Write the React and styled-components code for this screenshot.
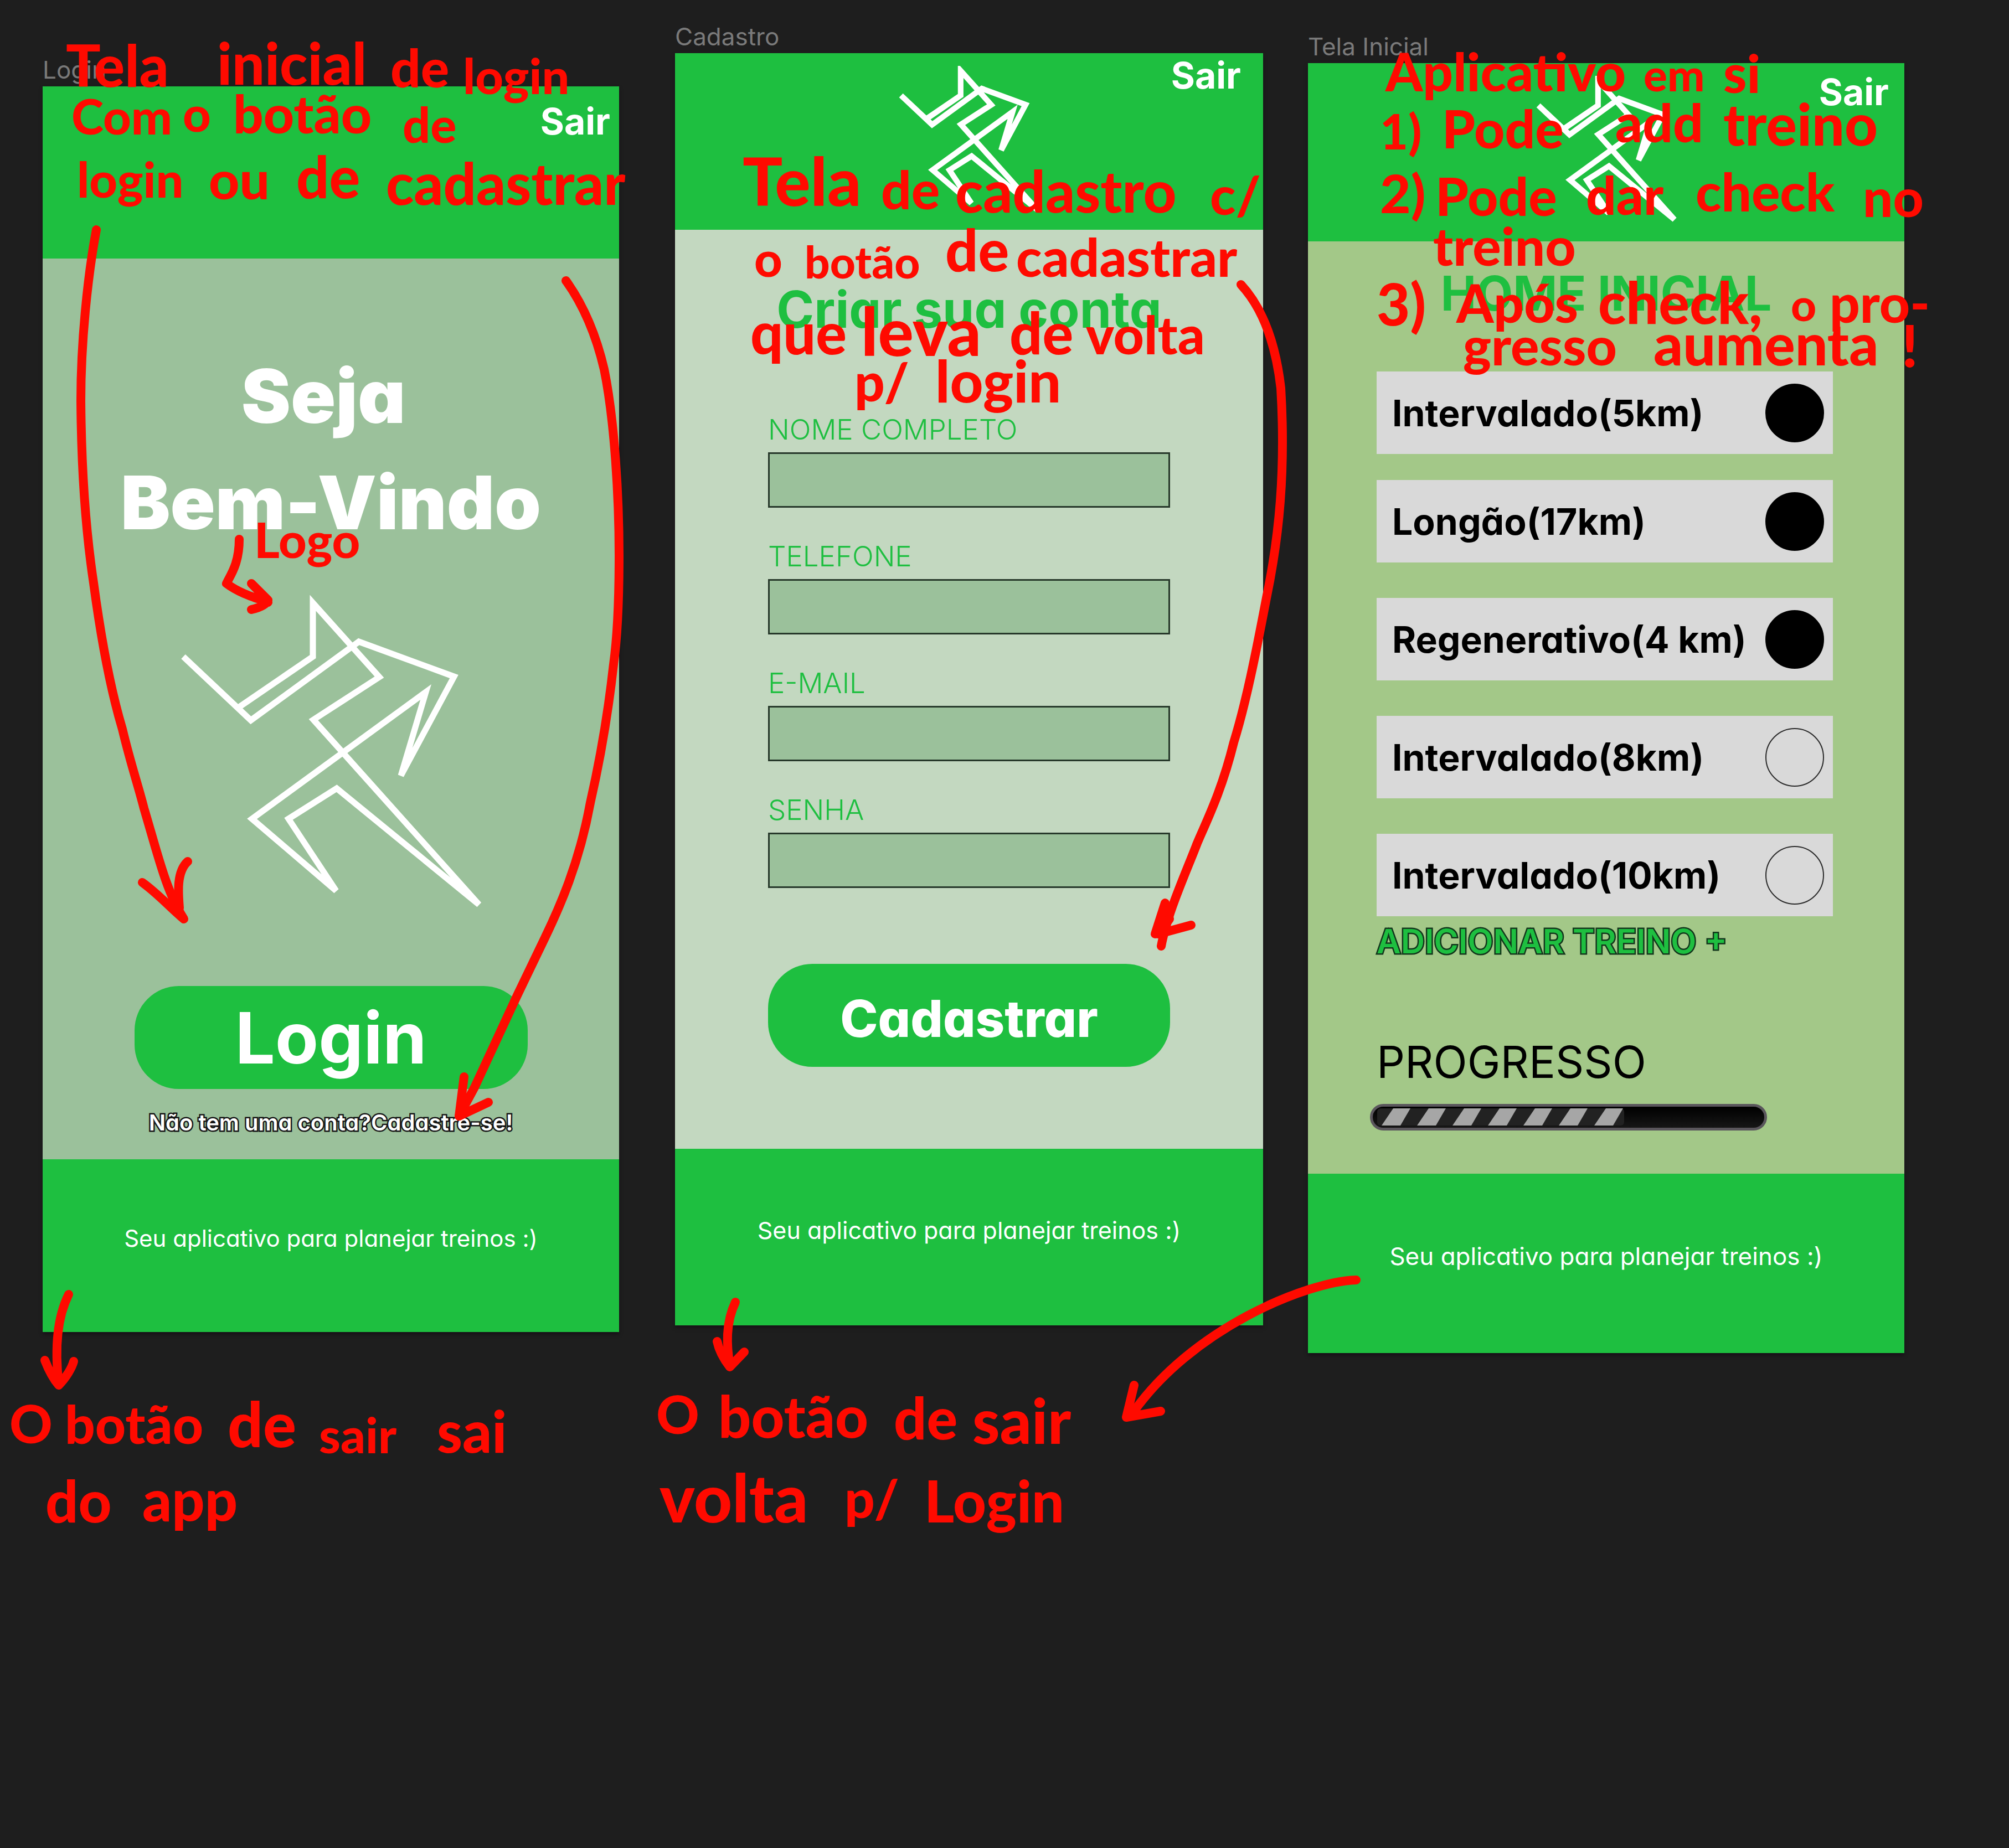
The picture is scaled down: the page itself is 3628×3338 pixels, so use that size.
import React from "react";
import styled, { createGlobalStyle } from "styled-components";

const color = {
  board: "#1e1e1e",
  green: "#1ebf40",
  sage: "#9bc19b",
  mint: "#c3d8c0",
  olive: "#a3c888",
  card: "#d9d9d9",
  label: "#7a7a7a",
  ink: "#ff0a00",
};

const GlobalStyle = createGlobalStyle`
  * { box-sizing: border-box; }
  html { background: ${color.board}; }
  body { margin: 0; font-family: Inter, "Liberation Sans", sans-serif; }
  h1, h2, p, ul { margin: 0; padding: 0; font-weight: inherit; }
  button { border: 0; margin: 0; padding: 0; background: none; font: inherit; color: inherit; cursor: pointer; }
`;

const Board = styled.main`
  position: relative;
  display: flex;
  align-items: flex-start;
  min-height: 100vh;
  padding: 0 189px 0 77px;
  background: ${color.board};
`;

const Column = styled.section`
  position: relative;
  flex: ${(p) => p.$grow} 1 0;
  min-width: 0;
  margin-left: ${(p) => p.$gap || 0}px;
  padding-top: ${(p) => p.$top}px;
`;

const FrameLabel = styled.h2`
  height: 57px;
  color: ${color.label};
  font-size: 44px;
  line-height: 54px;
`;

const Frame = styled.article`
  display: flex;
  flex-direction: column;
  font-feature-settings: "cv11" 1;
  box-shadow: 0 4px 6px rgba(15, 0, 15, 0.5);
`;

const Header = styled.header`
  display: grid;
  grid-template-columns: 1fr auto 1fr;
  align-items: start;
  height: ${(p) => p.$height}px;
  padding-top: 23px;
  background: ${color.green};
`;

const ExitButton = styled.button`
  grid-column: 3;
  justify-self: end;
  margin: ${(p) => p.$top}px ${(p) => p.$right}px 0 0;
  color: #fff;
  font-size: 66px;
  font-weight: 700;
  line-height: 76px;
  font-feature-settings: normal;
`;

const LogoDrawing = styled.svg`
  grid-column: 2;
  display: block;
  width: ${(p) => p.$width}px;
  fill: none;
  stroke: #fff;
  stroke-miterlimit: 4;
`;

const Body = styled.div`
  display: flex;
  flex-direction: column;
  align-items: ${(p) => p.$align || "center"};
  height: ${(p) => p.$height}px;
  background: ${(p) => p.$fill};
`;

const Footer = styled.footer`
  display: flex;
  align-items: center;
  justify-content: center;
  height: ${(p) => p.$height}px;
  padding-bottom: 26px;
  background: ${color.green};
  color: #fff;
  font-size: ${(p) => p.$size}px;
  line-height: 48px;
`;

const Welcome = styled.h1`
  margin: 152px 0 67px;
  color: #fff;
  font-size: 134px;
  font-weight: 900;
  line-height: 192px;
  text-align: center;
`;

const PillButton = styled.button`
  width: ${(p) => p.$width}px;
  height: 186px;
  margin-top: 137px;
  border-radius: 80px;
  background: ${color.green};
  color: #fff;
  font-size: ${(p) => p.$size}px;
  font-weight: ${(p) => p.$weight};
`;

const SignUpLink = styled.a`
  margin-top: 37px;
  color: #fff;
  font-size: 40px;
  font-weight: 600;
  line-height: 48px;
  text-decoration: none;
  -webkit-text-stroke: 5px #161616;
  paint-order: stroke fill;
`;

const ScreenTitle = styled.h1`
  align-self: center;
  margin-top: ${(p) => p.$top}px;
  color: ${color.green};
  font-size: ${(p) => p.$size}px;
  font-weight: 700;
  line-height: 100px;
`;

const Form = styled.form`
  display: flex;
  flex-direction: column;
  gap: 56px;
  width: 726px;
  margin-top: 135px;
`;

const Field = styled.label`
  display: flex;
  flex-direction: column;
  gap: 9px;
  color: ${color.green};
  font-size: 51px;
  font-weight: 300;
  line-height: 64px;
`;

const TextBox = styled.input`
  width: 100%;
  height: 100px;
  padding: 0 24px;
  border: 3px solid #26382a;
  border-radius: 0;
  background: ${color.sage};
  font: inherit;
  outline: none;
`;

const FormButton = styled(PillButton)`
  margin-top: 81px;
  padding-top: 10px;
`;

const Workouts = styled.ul`
  align-self: stretch;
  margin: 91px 129px 0 124px;
  list-style: none;
`;

const Workout = styled.li`
  display: flex;
  height: 149px;
  margin-top: 64px;
  background: ${color.card};

  &:first-child { margin-top: 0; }
  &:nth-child(2) { margin-top: 47px; }
`;

const WorkoutLabel = styled.label`
  flex: 1;
  display: flex;
  align-items: center;
  justify-content: space-between;
  padding: 0 16px 0 28px;
  color: #000;
  font-size: 66px;
  font-weight: 700;
  line-height: 72px;
`;

const Check = styled.input`
  appearance: none;
  width: 106px;
  height: 106px;
  margin: 0;
  border: 2px solid #2a2a2a;
  border-radius: 50%;

  &:checked { background: #000; border-color: #000; }
`;

const AddButton = styled.button`
  margin: 12px 0 0 124px;
  color: ${color.green};
  font-size: 60px;
  font-weight: 600;
  line-height: 66px;
  -webkit-text-stroke: 5px #12351b;
  paint-order: stroke fill;
`;

const ProgressTitle = styled.h2`
  margin: 135px 0 26px 124px;
  color: #000;
  font-size: 80px;
  line-height: 100px;
`;

const ProgressTrack = styled.div`
  width: 717px;
  height: 48px;
  margin-left: 112px;
  border: 5px solid #5a565c;
  border-radius: 24px;
  background: linear-gradient(#000, #161616);
  overflow: hidden;
`;

const Stripes = styled.svg`
  display: block;
  height: 38px;
  fill: #a6a6a6;
`;

const Note = styled.p`
  color: ${color.ink};
  font-family: Lato, "Liberation Sans", sans-serif;
  font-weight: 900;
  line-height: 1;
`;

const Word = styled.span`
  position: absolute;
  z-index: 2;
  left: ${(p) => p.$x}px;
  top: ${(p) => Math.round(p.$y - p.$size * 0.887)}px;
  font-size: ${(p) => p.$size}px;
  white-space: nowrap;
  pointer-events: none;
`;

const Arrows = styled.svg`
  position: absolute;
  z-index: 2;
  left: 0;
  top: 0;
  width: 100%;
  fill: none;
  stroke: ${color.ink};
  stroke-width: 16;
  stroke-linecap: round;
  stroke-linejoin: round;
  pointer-events: none;
`;

function Logo({ width, stroke }) {
  return (
    <LogoDrawing $width={width} viewBox="320 1070 552 574" strokeWidth={stroke} aria-label="Logo">
      <path d="M329 1186L451 1301L646 1159L818 1222L722 1401L767 1250L453 1479L605 1609L519 1479L606 1424L863 1634L564 1300L683 1223L563 1089V1186L430 1277" />
    </LogoDrawing>
  );
}

// Each word is [text, x inside its column, baseline y on the board, size].
const loginNotes = [
  [["Tela", 42, 157, 104], ["inicial", 315, 153, 104], ["de", 628, 158, 96], ["login", 759, 170, 88]],
  [["Com", 52, 243, 88], ["o", 253, 238, 88], ["botão", 344, 241, 96], ["de", 650, 258, 88]],
  [["login", 62, 357, 88], ["ou", 300, 360, 96], ["de", 458, 358, 104], ["cadastrar", 620, 370, 104]],
  [["Logo", 382, 1008, 88]],
  [["O", -60, 2607, 96], ["botão", 40, 2608, 96], ["de", 334, 2614, 112], ["sair", 499, 2625, 88], ["sai", 712, 2624, 104]],
  [["do", 5, 2750, 104], ["app", 180, 2748, 104]],
];

const signUpNotes = [
  [["Tela", 122, 372, 120], ["de", 372, 378, 96], ["cadastro", 506, 384, 104], ["c/", 966, 388, 96]],
  [["o", 143, 500, 88], ["botão", 234, 503, 80], ["de", 488, 490, 104], ["cadastrar", 616, 500, 96]],
  [["que", 136, 640, 104], ["leva", 336, 643, 120], ["de", 604, 640, 104], ["volta", 742, 640, 96]],
  [["p/", 324, 725, 96], ["login", 470, 727, 104]],
  [["O", -34, 2590, 96], ["botão", 78, 2597, 104], ["de", 395, 2600, 104], ["sair", 537, 2608, 112]],
  [["volta", -28, 2750, 120], ["p/", 306, 2742, 96], ["Login", 450, 2750, 104]],
];

const homeNotes = [
  [["Aplicativo", 140, 165, 96], ["em", 606, 165, 80], ["si", 750, 168, 96]],
  [["1)", 130, 270, 88], ["Pode", 242, 268, 96], ["add", 555, 257, 96], ["treino", 750, 263, 104]],
  [["2)", 130, 385, 96], ["Pode", 230, 390, 96], ["dar", 502, 388, 96], ["check", 700, 382, 96], ["no", 1002, 392, 96]],
  [["treino", 226, 480, 96]],
  [["3)", 124, 588, 104], ["Após", 268, 583, 96], ["check,", 524, 585, 104], ["o", 872, 580, 80], ["pro-", 942, 583, 96]],
  [["gresso", 280, 660, 96], ["aumenta", 624, 660, 104], ["!", 1072, 663, 104]],
];

function Notes({ lines }) {
  return lines.map((words, i) => (
    <Note key={i}>
      {words.map(([text, x, y, size]) => (
        <Word key={x} $x={x} $y={y} $size={size}>{text} </Word>
      ))}
    </Note>
  ));
}

const fields = [
  ["NOME COMPLETO", "text"],
  ["TELEFONE", "tel"],
  ["E-MAIL", "email"],
  ["SENHA", "password"],
];

const workouts = [
  ["Intervalado(5km)", true],
  ["Longão(17km)", true],
  ["Regenerativo(4 km)", true],
  ["Intervalado(8km)", false],
  ["Intervalado(10km)", false],
];

const slogan = "Seu aplicativo para planejar treinos :)";

export default function App() {
  return (
    <>
      <GlobalStyle />
      <Board>
        <Column $grow={1041} $top={99}>
          <FrameLabel>Login</FrameLabel>
          <Frame>
            <Header $height={311}>
              <ExitButton $top={2} $right={16}>Sair</ExitButton>
            </Header>
            <Body $height={1627} $fill={color.sage}>
              <Welcome>Seja{"\u00a0"}<br />Bem-Vindo</Welcome>
              <Logo width={552} stroke={11} />
              <PillButton $width={710} $size={128} $weight={700}>Login</PillButton>
              <SignUpLink href="#cadastro">Não tem uma conta?Cadastre-se!</SignUpLink>
            </Body>
            <Footer $height={312} $size={42}>{slogan}</Footer>
          </Frame>
          <Notes lines={loginNotes} />
        </Column>

        <Column $grow={1062} $gap={101} $top={39} id="cadastro">
          <FrameLabel>Cadastro</FrameLabel>
          <Frame>
            <Header $height={319}>
              <Logo width={254} stroke={22} />
              <ExitButton $top={-21} $right={40}>Sair</ExitButton>
            </Header>
            <Body $height={1660} $fill={color.mint}>
              <ScreenTitle $top={94} $size={92}>Criar sua conta</ScreenTitle>
              <Form onSubmit={(e) => e.preventDefault()}>
                {fields.map(([name, type]) => (
                  <Field key={name}>
                    {name}
                    <TextBox type={type} />
                  </Field>
                ))}
                <FormButton $width={726} $size={92} $weight={800}>Cadastrar</FormButton>
              </Form>
            </Body>
            <Footer $height={319} $size={43}>{slogan}</Footer>
          </Frame>
          <Notes lines={signUpNotes} />
        </Column>

        <Column $grow={1077} $gap={81} $top={57}>
          <FrameLabel>Tela Inicial</FrameLabel>
          <Frame>
            <Header $height={322}>
              <Logo width={254} stroke={22} />
              <ExitButton $top={-9} $right={28}>Sair</ExitButton>
            </Header>
            <Body $height={1684} $fill={color.olive} $align="flex-start">
              <ScreenTitle $top={44} $size={86}>HOME INICIAL</ScreenTitle>
              <Workouts>
                {workouts.map(([name, done]) => (
                  <Workout key={name}>
                    <WorkoutLabel>
                      {name}
                      <Check type="checkbox" defaultChecked={done} />
                    </WorkoutLabel>
                  </Workout>
                ))}
              </Workouts>
              <AddButton>ADICIONAR TREINO +</AddButton>
              <ProgressTitle>PROGRESSO</ProgressTitle>
              <ProgressTrack role="progressbar" aria-label="PROGRESSO" aria-valuenow={60}>
                <Stripes viewBox="0 0 460 38" width="460">
                  <rect x="8" y="3" width="446" height="31" rx="6" fill="#222" />
                  {[0, 1, 2, 3, 4, 5, 6].map((i) => (
                    <path key={i} transform={`translate(${i * 64} 0)`} d="M16 34L37 3H68L50 34Z" />
                  ))}
                </Stripes>
              </ProgressTrack>
            </Body>
            <Footer $height={324} $size={44}>{slogan}</Footer>
          </Frame>
          <Notes lines={homeNotes} />
        </Column>

        <Arrows viewBox="0 0 3628 3338" aria-hidden="true">
          <path d="M174 415C158 500 146 620 146 724C147 850 155 960 169 1053C182 1150 198 1240 221 1317C236 1380 250 1420 260 1460C284 1540 300 1610 331 1658" />
          <path d="M257 1594C285 1614 308 1640 332 1660M339 1556C318 1575 322 1615 324 1640" />
          <path d="M1022 507C1060 560 1080 620 1091 667C1110 760 1118 900 1118 1003C1118 1090 1115 1150 1108 1200C1098 1290 1082 1380 1066 1450C1046 1560 1010 1640 984 1694L934 1798L857 1964L829 2016" />
          <path d="M838 1945L829 2016L882 1991" />
          <path d="M2241 514C2288 565 2306 640 2313 701C2322 850 2310 970 2287 1080C2268 1180 2250 1270 2228 1341C2206 1430 2178 1485 2162 1523C2140 1580 2108 1650 2097 1709" />
          <path d="M2104 1631L2086 1687L2112 1660L2092 1687L2151 1671" />
          <path d="M124 2338C104 2378 98 2430 106 2500M81 2457C88 2475 96 2490 106 2502C120 2488 130 2470 133 2459" />
          <path d="M1328 2352C1310 2390 1312 2430 1318 2467M1295 2423Q1300 2446 1318 2469L1344 2442" />
          <path d="M2449 2312C2360 2315 2150 2400 2043 2556M2048 2502L2034 2560L2096 2549" />
          <path d="M432 974C432 1020 415 1040 409 1054C430 1070 455 1078 484 1088M454 1054L484 1084Q480 1095 454 1101" />
        </Arrows>
      </Board>
    </>
  );
}
